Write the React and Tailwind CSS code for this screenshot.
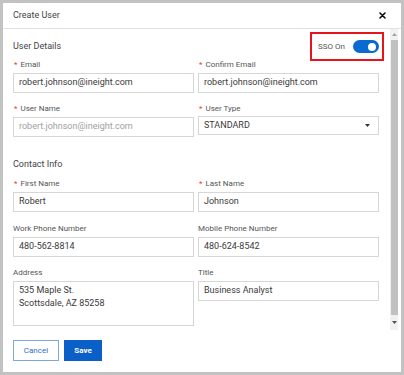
import React from "react";

const font = "font-['Roboto','Liberation_Sans',sans-serif]";

function Label({ text, required }) {
  return (
    <div className="h-[10px] leading-[10px] text-[8px] text-[#555] mb-[3px] whitespace-nowrap">
      {required && <span className="text-[#e53935] pl-[1px] mr-[3px]">*</span>}
      {text}
    </div>
  );
}

function Field({ label, required, value, muted }) {
  return (
    <div>
      <Label text={label} required={required} />
      <div
        className={
          "h-[20px] border border-[#d6d6d6] px-[5px] flex items-center text-[9px] " +
          (muted ? "text-[#a0a0a0]" : "text-[#3a3a3a]")
        }
      >
        {value}
      </div>
    </div>
  );
}

function Heading({ children }) {
  return <div className="text-[9px] leading-[14px] text-[#444]">{children}</div>;
}

export default function App() {
  return (
    <div className={"w-[404px] h-[375px] bg-[#c2c2c2] p-[3px] " + font}>
      <div className="bg-white h-full flex flex-col">
        {/* header */}
        <div className="h-[26px] shrink-0 border-b border-[#e2e2e2] flex items-center justify-between pl-[10px] pr-[15px]">
          <span className="text-[9px] text-[#444]">Create User</span>
          <svg width="7" height="7" viewBox="0 0 7 7">
            <path d="M1 1L6 6M6 1L1 6" stroke="#111" strokeWidth="1.6" strokeLinecap="round" />
          </svg>
        </div>

        {/* body */}
        <div className="h-[301px] shrink-0 flex">
          <div className="flex-1 pl-[10px] pr-[11px] pt-[3px] overflow-hidden">
            <div className="h-[28px] flex items-center justify-between">
              <Heading>User Details</Heading>
              <div className="h-[29px] w-[74px] mr-[-5px] border-2 border-[#e8141c] flex items-center justify-between pl-[6px] pr-[3px] self-start">
                <span className="text-[8px] text-[#555]">SSO On</span>
                <div className="relative w-[26px] h-[13px] rounded-full bg-[#0b6ad1]">
                  <div className="absolute right-[3px] top-[2.5px] w-[8px] h-[8px] rounded-full bg-white" />
                </div>
              </div>
            </div>

            <div className="grid grid-cols-2 gap-x-[4px]">
              <Field label="Email" required value="robert.johnson@ineight.com" />
              <Field label="Confirm Email" required value="robert.johnson@ineight.com" />
            </div>

            <div className="grid grid-cols-2 gap-x-[4px] mt-[11px]">
              <Field label="User Name" required value="robert.johnson@ineight.com" muted />
              <div>
                <Label text="User Type" required />
                <div className="h-[19px] mt-[-1px] border border-[#d6d6d6] pl-[5px] pr-[8px] flex items-center justify-between text-[9px] text-[#3a3a3a]">
                  <span>STANDARD</span>
                  <svg width="5" height="3" viewBox="0 0 5 3">
                    <path d="M0 0H5L2.5 3Z" fill="#333" />
                  </svg>
                </div>
              </div>
            </div>

            <div className="mt-[20px]">
              <Heading>Contact Info</Heading>
            </div>

            <div className="grid grid-cols-2 gap-x-[4px] mt-[8px]">
              <Field label="First Name" required value="Robert" />
              <Field label="Last Name" required value="Johnson" />
            </div>

            <div className="grid grid-cols-2 gap-x-[4px] mt-[12px]">
              <Field label="Work Phone Number" value="480-562-8814" />
              <Field label="Mobile Phone Number" value="480-624-8542" />
            </div>

            <div className="grid grid-cols-2 gap-x-[4px] mt-[11px] items-start">
              <div>
                <Label text="Address" />
                <div className="h-[45px] border border-[#d6d6d6] px-[5px] pt-[2px] text-[9px] leading-[13px] text-[#3a3a3a]">
                  <div>535 Maple St.</div>
                  <div>Scottsdale, AZ 85258</div>
                </div>
              </div>
              <Field label="Title" value="Business Analyst" />
            </div>
          </div>

          {/* scrollbar */}
          <div className="w-[8px] bg-[#f1f1f1] flex flex-col">
            <div className="h-[11px] flex items-center justify-center">
              <svg width="5" height="3" viewBox="0 0 5 3">
                <path d="M0 3H5L2.5 0Z" fill="#a3a3a3" />
              </svg>
            </div>
            <div className="h-[275px] mx-[0.5px] bg-[#c1c1c1]" />
            <div className="flex-1 flex items-center justify-center">
              <svg width="5" height="3" viewBox="0 0 5 3">
                <path d="M0 0H5L2.5 3Z" fill="#505050" />
              </svg>
            </div>
          </div>
          <div className="w-[3px]" />
        </div>

        {/* footer */}
        <div className="pl-[10px] pt-[10px] flex gap-[5px]">
          <button className="w-[46px] h-[21px] border border-[#7ba8e2] text-[#2f6fca] text-[8px] bg-white">
            Cancel
          </button>
          <button className="w-[38px] h-[21px] bg-[#0a5fc8] text-white text-[8px] font-bold">
            Save
          </button>
        </div>
      </div>
    </div>
  );
}
